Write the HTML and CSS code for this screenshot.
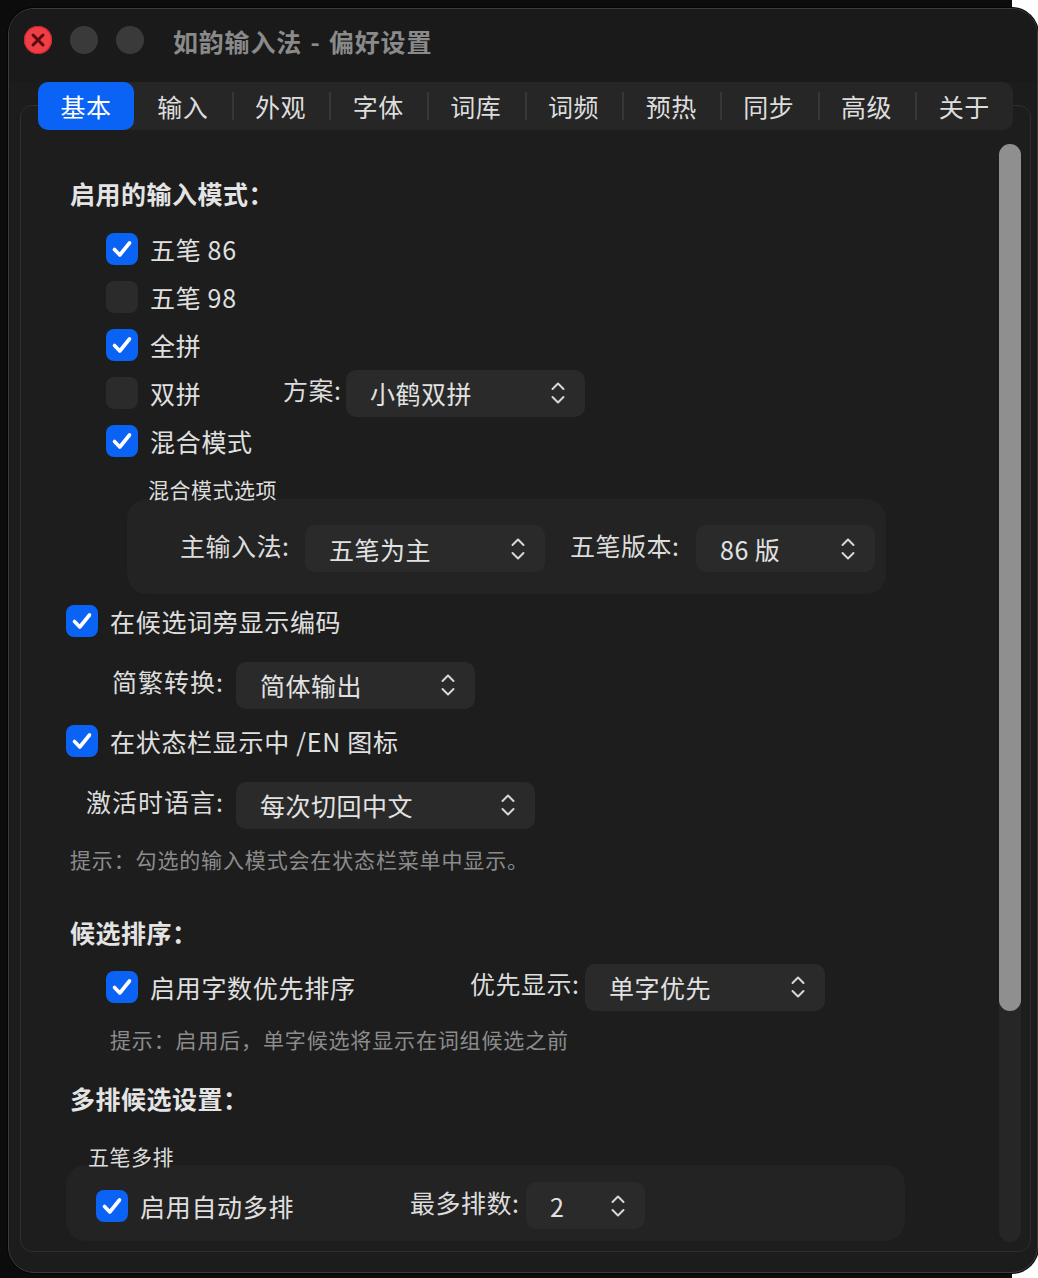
FILE: index.html
```html
<!DOCTYPE html>
<html lang="zh-CN">
<head>
<meta charset="utf-8">
<title>如韵输入法 - 偏好设置</title>
<link rel="stylesheet" href="styles.css">
</head>
<body>
<div class="window">
  <div class="titlebar">
    <div class="lights">
      <span class="light close">
        <svg width="28" height="28" viewBox="0 0 28 28"><path d="M9 9 L19 19 M19 9 L9 19" stroke="#5a0a0e" stroke-width="3" stroke-linecap="round"/></svg>
      </span>
      <span class="light"></span>
      <span class="light"></span>
    </div>
    <div class="title">如韵输入法 - 偏好设置</div>
  </div>

  <div class="tabs">
    <div class="tab selected">基本</div>
    <div class="tab">输入</div>
    <div class="tab sep">外观</div>
    <div class="tab sep">字体</div>
    <div class="tab sep">词库</div>
    <div class="tab sep">词频</div>
    <div class="tab sep">预热</div>
    <div class="tab sep">同步</div>
    <div class="tab sep">高级</div>
    <div class="tab sep">关于</div>
  </div>

  <div class="box">
    <div class="content">
      <div class="heading h-first">启用的输入模式：</div>

      <div class="row check-row indent first-row">
        <span class="cb on"><svg width="32" height="32" viewBox="0 0 32 32"><path d="M8.5 16.5 L13.8 22 L23.5 10" fill="none" stroke="#fff" stroke-width="3.6" stroke-linecap="round" stroke-linejoin="round"/></svg></span>
        <span class="label">五笔<span class="num">86</span></span>
      </div>
      <div class="row check-row indent">
        <span class="cb"></span>
        <span class="label">五笔<span class="num">98</span></span>
      </div>
      <div class="row check-row indent">
        <span class="cb on"><svg width="32" height="32" viewBox="0 0 32 32"><path d="M8.5 16.5 L13.8 22 L23.5 10" fill="none" stroke="#fff" stroke-width="3.6" stroke-linecap="round" stroke-linejoin="round"/></svg></span>
        <span class="label">全拼</span>
      </div>
      <div class="row check-row indent">
        <span class="cb"></span>
        <span class="label shuang">双拼</span>
        <span class="field-label scheme">方案:</span>
        <div class="popup w239">
          <span>小鹤双拼</span>
          <svg class="chev" width="16" height="26" viewBox="0 0 16 26"><path d="M2.5 9 L8 3.5 L13.5 9 M2.5 17 L8 22.5 L13.5 17" fill="none" stroke="#d8d8d8" stroke-width="2" stroke-linecap="round" stroke-linejoin="round"/></svg>
        </div>
      </div>
      <div class="row check-row indent">
        <span class="cb on"><svg width="32" height="32" viewBox="0 0 32 32"><path d="M8.5 16.5 L13.8 22 L23.5 10" fill="none" stroke="#fff" stroke-width="3.6" stroke-linecap="round" stroke-linejoin="round"/></svg></span>
        <span class="label">混合模式</span>
      </div>

      <div class="subhead mix-head">混合模式选项</div>
      <div class="group mix-group">
        <span class="field-label main">主输入法:</span>
        <div class="popup w240">
          <span>五笔为主</span>
          <svg class="chev" width="16" height="26" viewBox="0 0 16 26"><path d="M2.5 9 L8 3.5 L13.5 9 M2.5 17 L8 22.5 L13.5 17" fill="none" stroke="#d8d8d8" stroke-width="2" stroke-linecap="round" stroke-linejoin="round"/></svg>
        </div>
        <span class="field-label ver">五笔版本:</span>
        <div class="popup w179">
          <span>86 版</span>
          <svg class="chev" width="16" height="26" viewBox="0 0 16 26"><path d="M2.5 9 L8 3.5 L13.5 9 M2.5 17 L8 22.5 L13.5 17" fill="none" stroke="#d8d8d8" stroke-width="2" stroke-linecap="round" stroke-linejoin="round"/></svg>
        </div>
      </div>

      <div class="row check-row out code-row">
        <span class="cb on"><svg width="32" height="32" viewBox="0 0 32 32"><path d="M8.5 16.5 L13.8 22 L23.5 10" fill="none" stroke="#fff" stroke-width="3.6" stroke-linecap="round" stroke-linejoin="round"/></svg></span>
        <span class="label">在候选词旁显示编码</span>
      </div>
      <div class="row select-row sel1">
        <span class="side-label">简繁转换:</span>
        <div class="popup w239">
          <span>简体输出</span>
          <svg class="chev" width="16" height="26" viewBox="0 0 16 26"><path d="M2.5 9 L8 3.5 L13.5 9 M2.5 17 L8 22.5 L13.5 17" fill="none" stroke="#d8d8d8" stroke-width="2" stroke-linecap="round" stroke-linejoin="round"/></svg>
        </div>
      </div>
      <div class="row check-row out status-row">
        <span class="cb on"><svg width="32" height="32" viewBox="0 0 32 32"><path d="M8.5 16.5 L13.8 22 L23.5 10" fill="none" stroke="#fff" stroke-width="3.6" stroke-linecap="round" stroke-linejoin="round"/></svg></span>
        <span class="label">在状态栏显示中 /EN 图标</span>
      </div>
      <div class="row select-row sel2">
        <span class="side-label">激活时语言:</span>
        <div class="popup w299">
          <span>每次切回中文</span>
          <svg class="chev" width="16" height="26" viewBox="0 0 16 26"><path d="M2.5 9 L8 3.5 L13.5 9 M2.5 17 L8 22.5 L13.5 17" fill="none" stroke="#d8d8d8" stroke-width="2" stroke-linecap="round" stroke-linejoin="round"/></svg>
        </div>
      </div>
      <div class="hint hint1">提示：勾选的输入模式会在状态栏菜单中显示。</div>

      <div class="heading h-second">候选排序：</div>
      <div class="row check-row indent sort-row">
        <span class="cb on"><svg width="32" height="32" viewBox="0 0 32 32"><path d="M8.5 16.5 L13.8 22 L23.5 10" fill="none" stroke="#fff" stroke-width="3.6" stroke-linecap="round" stroke-linejoin="round"/></svg></span>
        <span class="label sort-label">启用字数优先排序</span>
        <span class="field-label prio">优先显示:</span>
        <div class="popup w240">
          <span>单字优先</span>
          <svg class="chev" width="16" height="26" viewBox="0 0 16 26"><path d="M2.5 9 L8 3.5 L13.5 9 M2.5 17 L8 22.5 L13.5 17" fill="none" stroke="#d8d8d8" stroke-width="2" stroke-linecap="round" stroke-linejoin="round"/></svg>
        </div>
      </div>
      <div class="hint hint2">提示：启用后，单字候选将显示在词组候选之前</div>

      <div class="heading h-third">多排候选设置：</div>
      <div class="subhead multi-head">五笔多排</div>
      <div class="group multi-group">
        <span class="cb on"><svg width="32" height="32" viewBox="0 0 32 32"><path d="M8.5 16.5 L13.8 22 L23.5 10" fill="none" stroke="#fff" stroke-width="3.6" stroke-linecap="round" stroke-linejoin="round"/></svg></span>
        <span class="label auto-label">启用自动多排</span>
        <span class="field-label rows">最多排数:</span>
        <div class="popup w119">
          <span>2</span>
          <svg class="chev" width="16" height="26" viewBox="0 0 16 26"><path d="M2.5 9 L8 3.5 L13.5 9 M2.5 17 L8 22.5 L13.5 17" fill="none" stroke="#d8d8d8" stroke-width="2" stroke-linecap="round" stroke-linejoin="round"/></svg>
        </div>
      </div>
    </div>
    <div class="scrollbar"><div class="thumb"></div></div>
  </div>
</div>
</body>
</html>
```

FILE: styles.css
```css
* { box-sizing: border-box; }

html, body {
  margin: 0;
  padding: 0;
}

body {
  width: 1038px;
  height: 1278px;
  overflow: hidden;
  background: linear-gradient(to right, #0c0c0c 1012px, #ffffff 1012px);
  font-family: "Noto Sans CJK SC", "Noto Sans", sans-serif;
  color: #dedede;
}

.window {
  margin: 8px 0 0 8px;
  width: 1030px;
  height: 1265px;
  border-radius: 26px;
  background: #1c1c1c;
  border: 1px solid #3c3c3c;
  box-shadow: 0 0 0 1px #050505;
  overflow: hidden;
  display: flex;
  flex-direction: column;
}

/* Title bar */
.titlebar {
  height: 73px;
  flex: none;
  display: flex;
  align-items: flex-start;
  padding: 17px 0 0 15px;
  background: #1a1a1a;
}

.lights {
  display: flex;
  gap: 18px;
}

.light {
  width: 28px;
  height: 28px;
  border-radius: 50%;
  background: #3a3a3a;
  display: flex;
  align-items: center;
  justify-content: center;
}

.light.close {
  background: #ee3f47;
  box-shadow: inset 0 0 0 1px #c8262e;
}

.title {
  margin-left: 29px;
  font-size: 25px;
  line-height: 30px;
  font-weight: 700;
  color: #8a8a8a;
  letter-spacing: 0.8px;
  word-spacing: 2px;
}

/* Tabs */
.tabs {
  position: relative;
  z-index: 1;
  margin-left: 29px;
  width: 975px;
  height: 48px;
  flex: none;
  display: flex;
  background: #262626;
  border-radius: 10px;
}

.tab {
  flex: 1;
  display: flex;
  align-items: center;
  justify-content: center;
  font-size: 25px;
  color: #dddddd;
  position: relative;
  letter-spacing: 0.5px;
}

.tab.sep::before {
  content: "";
  position: absolute;
  left: 0;
  top: 10px;
  height: 28px;
  width: 2px;
  background: #373737;
}

.tab.selected {
  background: #0b63f5;
  color: #ffffff;
  border-radius: 10px;
  flex: 0 0 96px;
}

/* Main box */
.box {
  position: relative;
  margin: -25px 0 0 11px;
  width: 1011px;
  height: 1147px;
  flex: none;
  border: 1px solid #2f2f2f;
  border-radius: 12px;
  background: #1d1d1d;
  overflow: hidden;
}

.content {
  padding: 70px 0 0 49px;
  display: flex;
  flex-direction: column;
  align-items: flex-start;
}

.heading {
  font-size: 25px;
  line-height: 34px;
  font-weight: 700;
  color: #e4e4e4;
  letter-spacing: 0.5px;
}

.row {
  display: flex;
  align-items: center;
  height: 48px;
}

.check-row .label {
  margin-left: 12px;
  font-size: 25px;
  color: #e0e0e0;
  letter-spacing: 0.7px;
}

.num { margin-left: 6px; letter-spacing: 1px; }

.indent { margin-left: 36px; }
.out { margin-left: -4px; }

.first-row { margin-top: 15px; }

.cb {
  width: 32px;
  height: 32px;
  border-radius: 8px;
  background: #2b2b2b;
  flex: none;
  display: flex;
}

.cb.on { background: #0b63f5; }

.field-label, .side-label {
  font-size: 25px;
  color: #dcdcdc;
  margin-bottom: 8px;
  flex: none;
  letter-spacing: 0.5px;
}

.label.shuang { width: 133px; }
.field-label.scheme { width: 63px; }

.popup {
  height: 47px;
  border-radius: 10px;
  background: #2a2a2a;
  display: flex;
  align-items: center;
  justify-content: space-between;
  padding: 0 19px 0 24px;
  font-size: 25px;
  color: #e2e2e2;
  flex: none;
  letter-spacing: 0.5px;
}

.popup .chev { flex: none; }

.w239 { width: 239px; }
.w240 { width: 240px; }
.w179 { width: 179px; }
.w299 { width: 299px; }
.w119 { width: 119px; }

.subhead {
  position: relative;
  z-index: 1;
  font-size: 21px;
  line-height: 24px;
  color: #dcdcdc;
  letter-spacing: 0.5px;
}

.mix-head { margin: 12px 0 0 78px; }

.group {
  background: #232323;
  border-radius: 20px;
  display: flex;
  align-items: center;
}

.mix-group {
  margin: -2px 0 0 57px;
  width: 759px;
  height: 95px;
  padding: 4px 0 0 53px;
}

.field-label.main { width: 125px; }
.field-label.ver { margin-left: 25px; width: 126px; }

.code-row { margin-top: 3px; }

.select-row .side-label {
  width: 154px;
  text-align: right;
  margin-right: 12px;
  letter-spacing: 1px;
}

.sel1 { margin-top: 16px; }
.status-row { margin-top: 8px; }
.sel2 { margin-top: 16px; }

.hint {
  font-size: 21px;
  line-height: 28px;
  color: #8c8c8c;
  letter-spacing: 0.85px;
}

.hint1 { margin-top: 16px; }

.h-second { margin-top: 42px; }

.sort-row { margin-top: 14px; }
.sort-label { width: 320px; }
.field-label.prio { width: 115px; }

.hint2 { margin: 14px 0 0 40px; }

.h-third { margin-top: 28px; }

.multi-head { margin: 29px 0 0 18px; }

.multi-group {
  margin: -3px 0 0 -4px;
  width: 839px;
  height: 76px;
  padding: 5px 0 0 30px;
}

.multi-group .auto-label {
  margin-left: 12px;
  width: 270px;
  font-size: 25px;
  color: #e0e0e0;
  letter-spacing: 0.7px;
}

.field-label.rows { width: 116px; }

/* Overlay scrollbar */
.scrollbar {
  position: absolute;
  right: 9px;
  top: 38px;
  width: 22px;
  bottom: 9px;
  border-radius: 11px;
  background: #262626;
}

.thumb {
  width: 22px;
  height: 867px;
  border-radius: 11px;
  background: #8f8f8f;
}
```
